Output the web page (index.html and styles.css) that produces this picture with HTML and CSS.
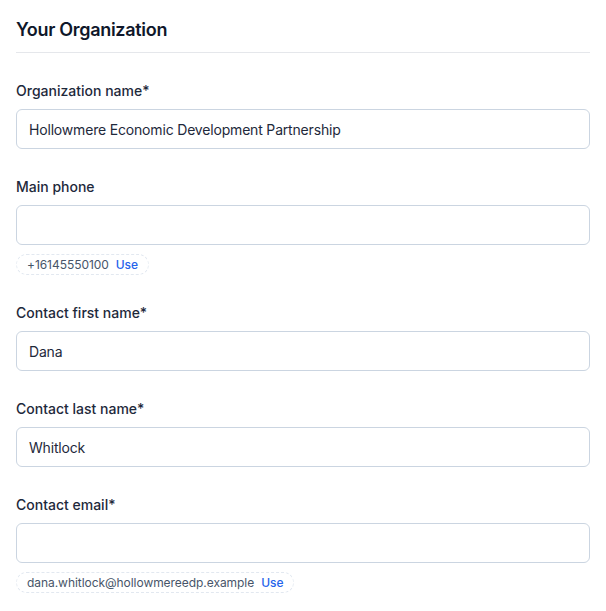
FILE: index.html
```html
<!DOCTYPE html>
<html lang="en">
<head>
<meta charset="utf-8">
<title>Your Organization</title>
<link rel="stylesheet" href="styles.css">
</head>
<body>
<section class="panel">
  <h2 class="title">Your Organization</h2>
  <div class="fields">
    <div class="field">
      <label class="label">Organization name*</label>
      <div class="input">Hollowmere Economic Development Partnership</div>
    </div>
    <div class="field">
      <label class="label">Main phone</label>
      <div class="input"></div>
      <div class="chip"><span class="chip-value">+16145550100</span><span class="chip-use">Use</span></div>
    </div>
    <div class="field">
      <label class="label">Contact first name*</label>
      <div class="input">Dana</div>
    </div>
    <div class="field">
      <label class="label">Contact last name*</label>
      <div class="input">Whitlock</div>
    </div>
    <div class="field">
      <label class="label">Contact email*</label>
      <div class="input"></div>
      <div class="chip"><span class="chip-value">dana.whitlock@hollowmereedp.example</span><span class="chip-use">Use</span></div>
    </div>
  </div>
</section>
</body>
</html>
```

FILE: styles.css
```css
* { box-sizing: border-box; }
html, body { margin: 0; background: #ffffff; }
body {
  font-family: Inter, "Noto Sans", "Liberation Sans", sans-serif;
  color: #0f172a;
  padding: 16px 16px 16px;
}
.panel { width: 574px; }
.title {
  margin: 0;
  font-size: 18px;
  line-height: 28px;
  font-weight: 600;
  letter-spacing: -0.3px;
  color: #0f172a;
  padding-bottom: 8px;
  border-bottom: 1px solid #e5e7eb;
}
.fields {
  display: flex;
  flex-direction: column;
  gap: 27px;
  padding-top: 27px;
}
.field { display: flex; flex-direction: column; }
.label {
  font-size: 14px;
  line-height: 21px;
  font-weight: 500;
  color: #1e293b;
  margin-bottom: 8px;
}
.input {
  height: 40px;
  border: 1px solid #cbd5e1;
  border-radius: 6px;
  padding: 0 12px;
  font-size: 14px;
  line-height: 40px;
  letter-spacing: -0.18px;
  color: #1e293b;
}
.chip {
  align-self: flex-start;
  margin-top: 9px;
  height: 21px;
  display: flex;
  align-items: center;
  gap: 7px;
  padding: 0 10px;
  border: 1px dashed #e2e8f0;
  border-radius: 999px;
  font-size: 12px;
  line-height: 16px;
  letter-spacing: -0.05px;
}
.chip-value { color: #475569; }
.chip-use { color: #2563eb; font-weight: 500; }
```
